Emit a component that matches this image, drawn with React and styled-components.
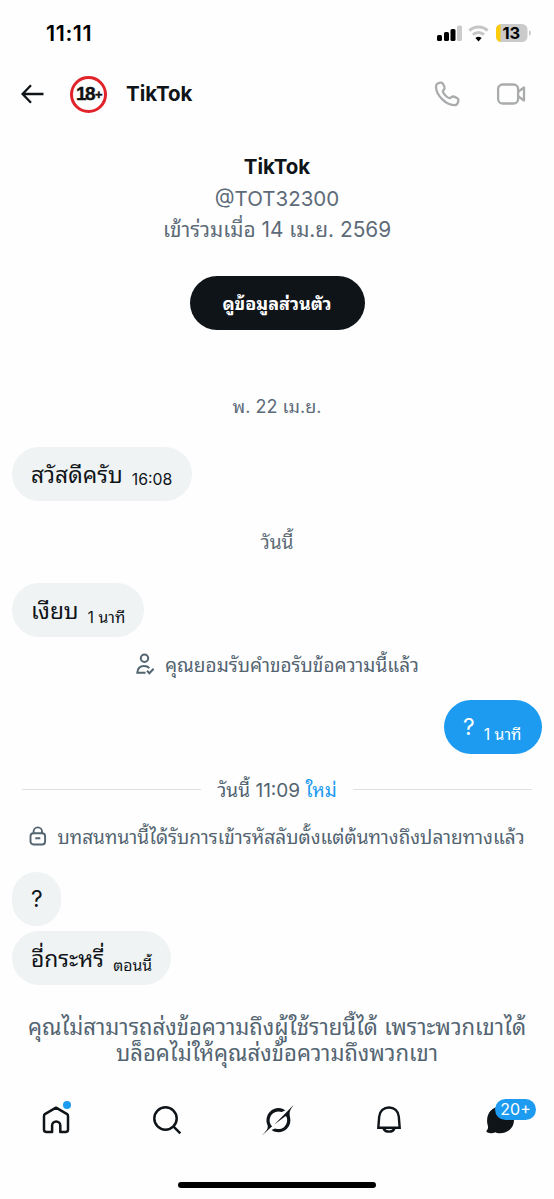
import React from 'react';
import styled, { createGlobalStyle } from 'styled-components';

const messages = [
  { kind: 'date', text: 'พ. 22 เม.ย.', height: 81 },
  { kind: 'bubble', text: 'สวัสดีครับ', time: '16:08', width: 180 },
  { kind: 'date', text: 'วันนี้', height: 82, size: 19.2 },
  { kind: 'bubble', text: 'เงียบ', time: '1 นาที', width: 132 },
];

const GrokIcon = () => (
  <svg width="32" height="32" viewBox="0 0 33 32" fill="#0f1419">
    <path d="M12.745 20.54l10.97-8.19c.539-.4 1.307-.244 1.564.38 1.349 3.288.746 7.241-1.938 9.955-2.683 2.714-6.417 3.31-9.83 1.954l-3.728 1.745c5.347 3.697 11.84 2.782 15.898-1.324 3.219-3.255 4.216-7.692 3.284-11.693l.008.009c-1.351-5.878.332-8.227 3.782-13.031L33 0l-4.54 4.59v-.014L12.743 20.544m-2.263 1.987c-3.837-3.707-3.175-9.446.1-12.755 2.42-2.449 6.388-3.448 9.852-1.979l3.72-1.737c-.67-.49-1.53-1.017-2.515-1.387-4.455-1.854-9.789-.931-13.41 2.728-3.483 3.523-4.579 8.94-2.697 13.561 1.405 3.454-.899 5.898-3.22 8.364C1.49 30.2.666 31.074 0 32l10.478-9.466" />
  </svg>
);

const StatusIcons = () => (
  <svg width="96" height="24" viewBox="0 0 96 24">
    <rect x="1" y="14" width="5" height="6" rx="1.6" />
    <rect x="8" y="11" width="5" height="9" rx="1.6" />
    <rect x="14.5" y="8" width="5" height="12" rx="1.6" />
    <rect x="21" y="4.5" width="5" height="15.5" rx="1.6" fill="#cbcbcb" />
    <g fill="none" stroke="#c6c6c6" strokeWidth="3">
      <path d="M33.4 9.6a13.4 13.4 0 0 1 18.2 0" />
      <path d="M37 13.6a8.2 8.2 0 0 1 11 0" />
    </g>
    <path d="M39.4 17a5 5 0 0 1 6.2 0L42.5 20.4z" />
    <clipPath id="battery"><rect x="60" y="3" width="31.5" height="18" rx="5.5" /></clipPath>
    <g clipPath="url(#battery)">
      <rect x="60" y="3" width="32" height="18" fill="#cacaca" />
      <rect x="60" y="3" width="4.5" height="18" fill="#fccb0a" />
    </g>
    <path d="M93 9.3q2 .8 2 2.8t-2 2.8z" fill="#cacaca" />
    <text x="75.3" y="17.8" textAnchor="middle" fontFamily="Inter, sans-serif" fontWeight="700" fontSize="16.5">13</text>
  </svg>
);

export default function App () {
  return (
    <Screen>
      <GlobalStyle />
      <StatusBar>
        <Clock>11:11</Clock>
        <StatusIcons />
      </StatusBar>
      <Header>
        <svg width="24" height="24" viewBox="0 0 24 24" fill="none" stroke="#0f1419" strokeWidth="2.3">
          <path d="M11 3.2 2.6 12l8.4 8.8M2.6 12H23.5" />
        </svg>
        <Avatar>
          18
          <AvatarPlus>+</AvatarPlus>
        </Avatar>
        <HeaderName>TikTok</HeaderName>
        <HeaderActions>
          <svg width="28" height="28" viewBox="0 0 28 28" fill="none" stroke="#a9abad" strokeWidth="2.3" strokeLinejoin="round">
            <path d="M5.2 3.2C7.300 2.500 9 2.500 9.800 3.600c1 1.500 1.900 3.500 1.800 4.700-.2 1.500-1.900 1.700-1.700 3.200.3 2.200 4.300 6.300 6.600 6.700 1.400.2 1.700-1.500 3.200-1.700 1.300-.1 3.400.9 4.800 1.900 1.200.9 1 2.900.2 4.600-.6 1.400-1.900 2.300-3.700 2.200C12.800 24.800 3.500 15.500 3 7.300 2.900 5.300 3.500 3.900 5.200 3.200z" />
          </svg>
          <svg width="30" height="24" viewBox="0 0 30 24" fill="none" stroke="#a9abad" strokeWidth="2.3" strokeLinejoin="round">
            <rect x="2.1" y="2.5" width="20" height="19" rx="4.5" />
            <path d="M22.5 9.5 28 5.500v13l-5.500-4" />
          </svg>
        </HeaderActions>
      </Header>

      <Profile>
        <ProfileName>TikTok</ProfileName>
        <ProfileLine>@TOT32300</ProfileLine>
        <ProfileLine $height={32} $size={20.8}>เข้าร่วมเมื่อ 14 เม.ย. 2569</ProfileLine>
        <ProfileButton>ดูข้อมูลส่วนตัว</ProfileButton>
      </Profile>

      <Thread>
        {messages.map((item) => (item.kind === 'date' ? (
          <DateLine key={item.text} $height={item.height} $size={item.size}>{item.text}</DateLine>
        ) : (
          <Bubble key={item.text} $width={item.width}>
            {item.text}
            <Time>{item.time}</Time>
          </Bubble>
        )))}
        <SystemLine $height={53} $below={10}>
          <svg width="20" height="22" viewBox="0 0 20 22" fill="none" stroke="#536471" strokeWidth="2">
            <circle cx="9.5" cy="5.3" r="3.7" />
            <path d="M10.5 19.7H2.3c.3-4.500 3.200-6.700 6.700-6.700 2.300 0 4.200.8 5.400 2.100M12 17.800l2.400 2.400 4.200-4.400" />
          </svg>
          <span>คุณยอมรับคำขอรับข้อความนี้แล้ว</span>
        </SystemLine>
        <Bubble $own $width={98}>
          ?
          <Time>1 นาที</Time>
        </Bubble>
        <Divider>
          <Rule />
          <DividerLabel>วันนี้ 11:09 <NewTag>ใหม่</NewTag></DividerLabel>
          <Rule />
        </Divider>
        <SystemLine $height={23} $below={25}>
          <svg width="18" height="20" viewBox="0 0 18 20" fill="none" stroke="#536471" strokeWidth="1.9">
            <rect x="1.5" y="7.3" width="14.6" height="11.2" rx="3" />
            <path d="M4.6 7V5.6a4.2 4.2 0 0 1 8.400 0V7M6.300 12.300h5" />
          </svg>
          <span>บทสนทนานี้ได้รับการเข้ารหัสลับตั้งแต่ต้นทางถึงปลายทางแล้ว</span>
        </SystemLine>
        <Bubble $width={49}>?</Bubble>
        <Bubble $width={159} $gap={5}>
          อี่กระหรี่
          <Time>ตอนนี้</Time>
        </Bubble>
      </Thread>

      <BlockedNotice>
        <div>คุณไม่สามารถส่งข้อความถึงผู้ใช้รายนี้ได้ เพราะพวกเขาได้</div>
        <div>บล็อคไม่ให้คุณส่งข้อความถึงพวกเขา</div>
      </BlockedNotice>

      <TabBar>
        <Tab>
          <svg width="30" height="30" viewBox="0 0 30 30" fill="none" stroke="#0f1419" strokeWidth="2.5" strokeLinejoin="round">
            <path d="M15 2.7 26.1 9.1Q27 9.700 27 10.900V24.500Q27 27 24.500 27H19.300V20.500a4.100 4.100 0 0 0-8.200 0V27H5.500Q3 27 3 24.500V10.900Q3 9.700 3.900 9.100z" />
          </svg>
          <Dot />
        </Tab>
        <Tab>
          <svg width="30" height="30" viewBox="0 0 30 30" fill="none" stroke="#0f1419" strokeWidth="2.5">
            <circle cx="13.5" cy="13.5" r="11.2" />
            <path d="m21.3 21.3 7 7" />
          </svg>
        </Tab>
        <Tab><GrokIcon /></Tab>
        <Tab>
          <svg width="30" height="30" viewBox="0 0 30 30" fill="none" stroke="#0f1419" strokeWidth="2.4">
            <path d="M4.3 22.8 5.2 11.500C5.700 6 9.800 2.500 15 2.500S24.300 6 24.800 11.500l.9 11.300zM9.600 23.500a5.600 4.200 0 0 0 10.800 0" />
          </svg>
        </Tab>
        <Tab>
          <svg width="30" height="30" viewBox="0 0 30 30" fill="#0f1419">
            <path d="M15.5 1.500C24 1.500 29 7.500 29 14.500c0 8.500-6 13.800-14 13.800-2 0-3.500-.4-4.700-1-2.300 1.300-5.300 1.500-8.300 0-.9-.5-.8-1.300-.2-1.900 1.500-1.600 1.500-3.200.9-5.200C.2 11 5.500 1.500 15.500 1.500z" />
          </svg>
          <Badge>20+</Badge>
        </Tab>
      </TabBar>
      <HomeIndicator />
    </Screen>
  );
}

const GlobalStyle = createGlobalStyle`
  body {
    margin: 0;
    background: #fff;
  }
  * {
    box-sizing: border-box;
  }
  svg {
    flex: none;
    display: block;
  }
`;

const Screen = styled.div`
  display: flex;
  flex-direction: column;
  width: 554px;
  height: 1199px;
  overflow: hidden;
  background: #fefefe;
  color: #0f1419;
  font-family: Inter, Thonburi, "Noto Sans Thai Looped", "Noto Looped Thai", Loma, Garuda, Waree, Umpush, Laksaman, FreeSans, Tahoma, FreeSerif, "Noto Sans Thai", sans-serif;
  white-space: nowrap;

  > * {
    flex: none;
  }
`;

const StatusBar = styled.div`
  display: flex;
  align-items: center;
  justify-content: space-between;
  height: 66px;
  padding: 0 22px 0 46px;
`;

const Clock = styled.div`
  color: #000;
  font-size: 21.5px;
  font-weight: 600;
  letter-spacing: 0.6px;
`;

const Header = styled.div`
  display: flex;
  align-items: center;
  height: 56px;
  padding: 0 28px 0 20px;
`;

const Avatar = styled.div`
  display: flex;
  align-items: center;
  justify-content: center;
  width: 37px;
  height: 37px;
  margin: 0 19px 0 26px;
  border: 3px solid #e0242a;
  border-radius: 50%;
  color: #111;
  font-family: "Liberation Sans", sans-serif;
  font-size: 19px;
  font-weight: 700;
  letter-spacing: -1.6px;
  -webkit-text-stroke: 0.4px #111;
`;

const AvatarPlus = styled.span`
  margin-left: 1px;
  font-size: 13px;
`;

const HeaderName = styled.div`
  padding-bottom: 1px;
  font-size: 20.5px;
  font-weight: 700;
`;

const HeaderActions = styled.div`
  display: flex;
  align-items: center;
  gap: 35px;
  margin-left: auto;
`;

const Profile = styled.div`
  display: flex;
  flex-direction: column;
  align-items: center;
  padding-top: 29px;
`;

const ProfileName = styled.div`
  height: 32px;
  line-height: 32px;
  font-size: 20.5px;
  font-weight: 700;
`;

const ProfileLine = styled.div`
  height: ${({ $height }) => $height || 31}px;
  line-height: 31px;
  color: #5d6b78;
  font-size: ${({ $size }) => $size || 20.5}px;
`;

const ProfileButton = styled.div`
  display: flex;
  align-items: center;
  justify-content: center;
  width: 175px;
  height: 54px;
  margin-top: 30px;
  padding-bottom: 3px;
  border-radius: 27px;
  background: #0f1419;
  color: #fff;
  font-size: 18px;
  font-weight: 700;
`;

const Thread = styled.div`
  display: flex;
  flex-direction: column;
  padding: 36px 12px 0;
`;

const DateLine = styled.div`
  height: ${({ $height }) => $height}px;
  line-height: ${({ $height }) => $height}px;
  text-align: center;
  color: #5d6b78;
  font-size: ${({ $size }) => $size || 18}px;
`;

const Bubble = styled.div`
  display: flex;
  align-items: center;
  gap: 9px;
  align-self: ${({ $own }) => ($own ? 'flex-end' : 'flex-start')};
  width: ${({ $width }) => $width}px;
  height: 54px;
  margin-top: ${({ $gap }) => $gap || 0}px;
  padding: 0 0 2px 19px;
  border-radius: 27px;
  background: ${({ $own }) => ($own ? '#1d9bf0' : '#eff3f4')};
  color: ${({ $own }) => ($own ? '#fff' : '#0f1419')};
  font-size: 22.8px;
`;

const Time = styled.span`
  padding-top: 13px;
  font-size: 15.8px;
`;

const SystemLine = styled.div`
  display: flex;
  align-items: center;
  justify-content: center;
  gap: 10px;
  height: ${({ $height }) => $height}px;
  margin-bottom: ${({ $below }) => $below}px;
  color: #536471;
  font-size: 19.05px;
`;

const Divider = styled.div`
  display: flex;
  align-items: center;
  gap: 16px;
  height: 70px;
  padding: 0 10px;
  color: #536471;
  font-size: 19px;
`;

const DividerLabel = styled.div`
  padding-bottom: 2px;
`;

const Rule = styled.div`
  flex: 1;
  height: 1px;
  background: #dfe2e4;
`;

const NewTag = styled.span`
  color: #1d9bf0;
`;

const BlockedNotice = styled.div`
  height: 78px;
  padding-top: 29px;
  text-align: center;
  color: #536471;
  font-size: 22.1px;
  line-height: 26px;
`;

const TabBar = styled.div`
  display: flex;
  justify-content: space-between;
  height: 70px;
  margin-top: 22px;
  padding: 0 39px 0 41px;
`;

const Tab = styled.div`
  position: relative;
  display: flex;
  align-items: center;
  justify-content: center;
  width: 30px;
  height: 70px;
`;

const Dot = styled.div`
  position: absolute;
  top: 16px;
  right: 0;
  width: 8px;
  height: 8px;
  border-radius: 50%;
  background: #1d9bf0;
`;

const Badge = styled.div`
  position: absolute;
  top: 14px;
  left: 10px;
  width: 41px;
  height: 21px;
  border-radius: 11px;
  background: #1d9bf0;
  color: #fff;
  font-size: 16px;
  line-height: 21px;
  text-align: center;
`;

const HomeIndicator = styled.div`
  align-self: center;
  width: 198px;
  height: 6px;
  margin-top: 27px;
  border-radius: 3px;
  background: #000;
`;
